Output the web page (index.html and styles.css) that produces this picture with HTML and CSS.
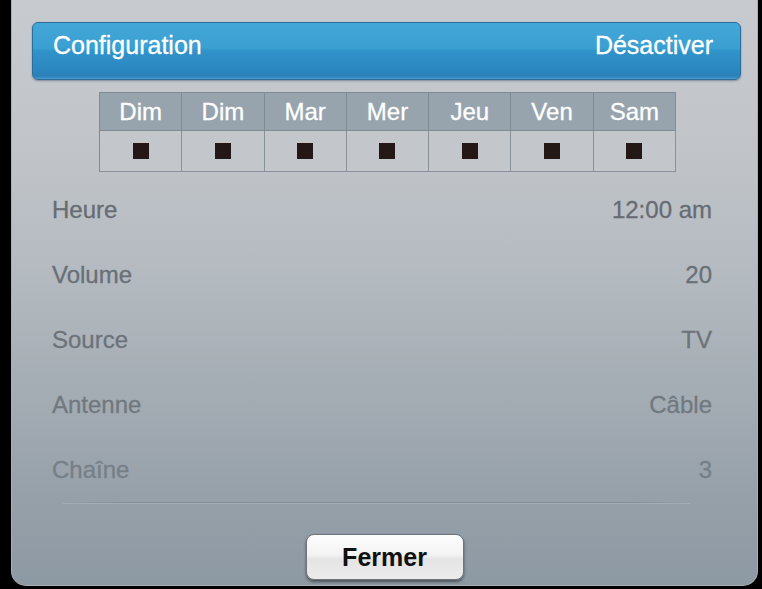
FILE: index.html
```html
<!DOCTYPE html>
<html lang="fr">
<head>
<meta charset="utf-8">
<title>Configuration</title>
<link rel="stylesheet" href="styles.css">
</head>
<body>
<div class="panel">
  <div class="header">
    <span>Configuration</span>
    <span>Désactiver</span>
  </div>
  <div class="days">
    <div class="day">Dim</div>
    <div class="day">Dim</div>
    <div class="day">Mar</div>
    <div class="day">Mer</div>
    <div class="day">Jeu</div>
    <div class="day">Ven</div>
    <div class="day">Sam</div>
    <div class="box"><span class="sq"></span></div>
    <div class="box"><span class="sq"></span></div>
    <div class="box"><span class="sq"></span></div>
    <div class="box"><span class="sq"></span></div>
    <div class="box"><span class="sq"></span></div>
    <div class="box"><span class="sq"></span></div>
    <div class="box"><span class="sq"></span></div>
  </div>
  <div class="rows">
    <div class="row r1"><span>Heure</span><span>12:00 am</span></div>
    <div class="row r2"><span>Volume</span><span>20</span></div>
    <div class="row r3"><span>Source</span><span>TV</span></div>
    <div class="row r4"><span>Antenne</span><span>Câble</span></div>
    <div class="row r5"><span>Chaîne</span><span>3</span></div>
  </div>
  <div class="divider"></div>
  <div class="footer">
    <button class="btn">Fermer</button>
  </div>
</div>
</body>
</html>
```

FILE: styles.css
```css
html, body {
  margin: 0;
  padding: 0;
  background: #000;
}
body {
  width: 762px;
  height: 589px;
  overflow: hidden;
  font-family: "Liberation Sans", Arial, sans-serif;
}
.panel {
  box-sizing: border-box;
  margin-left: 11px;
  width: 747px;
  height: 586px;
  border: 1px solid #a9afb6;
  border-top: none;
  border-radius: 0 0 15px 15px;
  background: linear-gradient(to bottom, #c7cacf 0%, #c1c5ca 25%, #b5bbc1 45%, #a6aeb5 65%, #96a0a9 85%, #8d99a3 100%);
  padding-top: 22px;
  display: flex;
  flex-direction: column;
}
.header {
  box-sizing: border-box;
  margin: 0 16px 0 20px;
  height: 58px;
  padding: 8px 27px 0 20px;
  display: flex;
  justify-content: space-between;
  align-items: flex-start;
  font-size: 25px;
  line-height: 28px;
  color: #fff;
  -webkit-text-stroke: 0.3px #fff;
  border-radius: 6px;
  border: 1px solid #2b6e9c;
  background: linear-gradient(to bottom, #43a8d7 0%, #3a9fd1 45%, #3093c9 50%, #2d8ac3 75%, #2a81ba 95%, #4c9bcb 100%);
  box-shadow: 0 1px 2px rgba(40, 60, 80, 0.45);
}
.days {
  margin: 12px 0 0 87px;
  width: 577px;
  display: grid;
  grid-template-columns: repeat(7, 1fr);
  border-top: 1px solid #808a92;
  border-left: 1px solid #808a92;
  box-sizing: border-box;
}
.day {
  height: 37px;
  line-height: 37px;
  text-align: center;
  background: #97a4ad;
  color: #fff;
  -webkit-text-stroke: 0.3px #fff;
  font-size: 24px;
  border-right: 1px solid #808a92;
  border-bottom: 1px solid #808a92;
}
.box {
  height: 40px;
  display: flex;
  align-items: center;
  justify-content: center;
  background: #c3c6ca;
  border-right: 1px solid #8a9299;
  border-bottom: 1px solid #8a9299;
}
.sq {
  width: 16px;
  height: 16px;
  background: #231815;
}
.rows {
  margin-top: 5px;
}
.row {
  height: 65px;
  line-height: 65px;
  padding: 0 45px 0 40px;
  display: flex;
  justify-content: space-between;
  font-size: 24px;
  -webkit-text-stroke: 0.3px currentColor;
}
.r1 { color: #666c73; }
.r2 { color: #686f76; }
.r3 { color: #6c737a; }
.r4 { color: #71787f; }
.r5 { color: #767f87; }
.divider {
  height: 1px;
  margin: 0 67px 0 51px;
  background: linear-gradient(to right, rgba(128,138,147,0), #838d96 10%, #838d96 90%, rgba(128,138,147,0));
  box-shadow: 0 1px 0 rgba(180,188,195,0.5);
}
.footer {
  display: flex;
  justify-content: center;
  padding-top: 31px;
}
.btn {
  width: 158px;
  height: 46px;
  padding: 0;
  border: 1px solid #6d747b;
  border-radius: 8px;
  background: linear-gradient(to bottom, #fdfdfd 0%, #f3f3f3 45%, #e4e4e4 55%, #ececec 100%);
  box-shadow: 0 2px 3px rgba(0, 0, 0, 0.45);
  font-family: "Liberation Sans", Arial, sans-serif;
  font-size: 25px;
  font-weight: bold;
  color: #111;
  line-height: 44px;
}
```
